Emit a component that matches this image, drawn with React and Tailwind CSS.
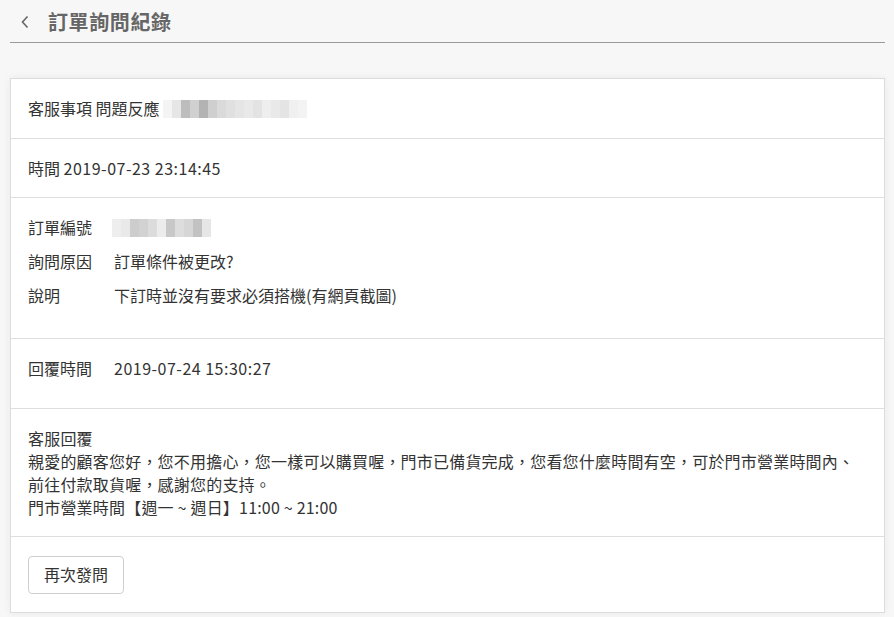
const font = { fontFamily: '"Noto Sans CJK TC", "Noto Sans", sans-serif' };

const Pixels = ({ cells, className = '' }) => (
  <div className={`flex h-[18px] ${className}`}>
    {cells.map((c, i) => (
      <div key={i} className={`h-full w-[9px] ${c}`} />
    ))}
  </div>
);

const Row = ({ children, className = '' }) => (
  <div className={`border-b border-[#dedede] px-[17px] pt-[18px] ${className}`}>{children}</div>
);

const Field = ({ label, children }) => (
  <div className="flex h-[23px] items-center">
    <span className="w-[86px] shrink-0">{label}</span>
    {children}
  </div>
);

export default function App() {
  return (
    <div className="min-h-[617px] bg-[#f7f7f7] pl-[10px] pr-[9px] text-[16px] leading-[23px] text-[#333]" style={font}>
      <header className="flex h-[43px] items-center gap-[18px] border-b border-[#9a9a9a] pl-[10px]">
        <svg width="10" height="14" viewBox="0 0 10 14" className="mt-[1px]">
          <path d="M7.5 1.5 2.5 7l5 5.5" fill="none" stroke="#666" strokeWidth="1.6" />
        </svg>
        <h1 className="text-[20px] font-bold tracking-[0.6px] text-[#666]">訂單詢問紀錄</h1>
      </header>

      <div className="mt-[35px] border border-[#dcdcdc] bg-white shadow-[0_0_8px_rgba(0,0,0,0.06)]">
        <Row className="h-[60px]">
          <div className="flex h-[23px] items-center">
            <span>客服事項 問題反應</span>
            <Pixels
              className="ml-[3px]"
              cells={['bg-[#f4f4f4]', 'bg-[#e6e6e6]', 'bg-[#bdbdbd]', 'bg-[#d0d0d0]', 'bg-[#b3b3b3]', 'bg-[#cfcfcf]', 'bg-[#dadada]', 'bg-[#e0e0e0]', 'bg-[#e5e5e5]', 'bg-[#e9e9e9]', 'bg-[#e3e3e3]', 'bg-[#eeeeee]', 'bg-[#e9e9e9]', 'bg-[#e4e4e4]', 'bg-[#f0f0f0]', 'bg-[#f3f3f3]']}
            />
          </div>
        </Row>
        <Row className="h-[59px]">
          時間 <span className="tracking-[0.5px]">2019-07-23 23:14:45</span>
        </Row>
        <Row className="flex h-[141px] flex-col gap-[11px]">
          <Field label="訂單編號">
            <Pixels
              className="-ml-[2px]"
              cells={['bg-[#eeeeee]', 'bg-[#e9e9e9]', 'bg-[#cdcdcd]', 'bg-[#d2d2d2]', 'bg-[#dcdcdc]', 'bg-[#ececec]', 'bg-[#c8c8c8]', 'bg-[#dddddd]', 'bg-[#d6d6d6]', 'bg-[#c2c2c2]', 'bg-[#e6e6e6]']}
            />
          </Field>
          <Field label="詢問原因">訂單條件被更改?</Field>
          <Field label="說明">下訂時並沒有要求必須搭機(有網頁截圖)</Field>
        </Row>
        <Row className="h-[70px]">
          <Field label="回覆時間">
            <span className="tracking-[0.5px]">2019-07-24 15:30:27</span>
          </Field>
        </Row>
        <Row className="h-[128px] tracking-[0.2px]">
          <p>客服回覆</p>
          <p>親愛的顧客您好，您不用擔心，您一樣可以購買喔，門市已備貨完成，您看您什麼時間有空，可於門市營業時間內、</p>
          <p>前往付款取貨喔，感謝您的支持。</p>
          <p>門市營業時間【週一 ~ 週日】11:00 ~ 21:00</p>
        </Row>
        <div className="flex h-[75px] items-center px-[17px]">
          <button className="h-[38px] rounded-[4px] border border-[#cfcfcf] bg-white px-[15px] text-[16px] text-[#333]">
            再次發問
          </button>
        </div>
      </div>
    </div>
  );
}
